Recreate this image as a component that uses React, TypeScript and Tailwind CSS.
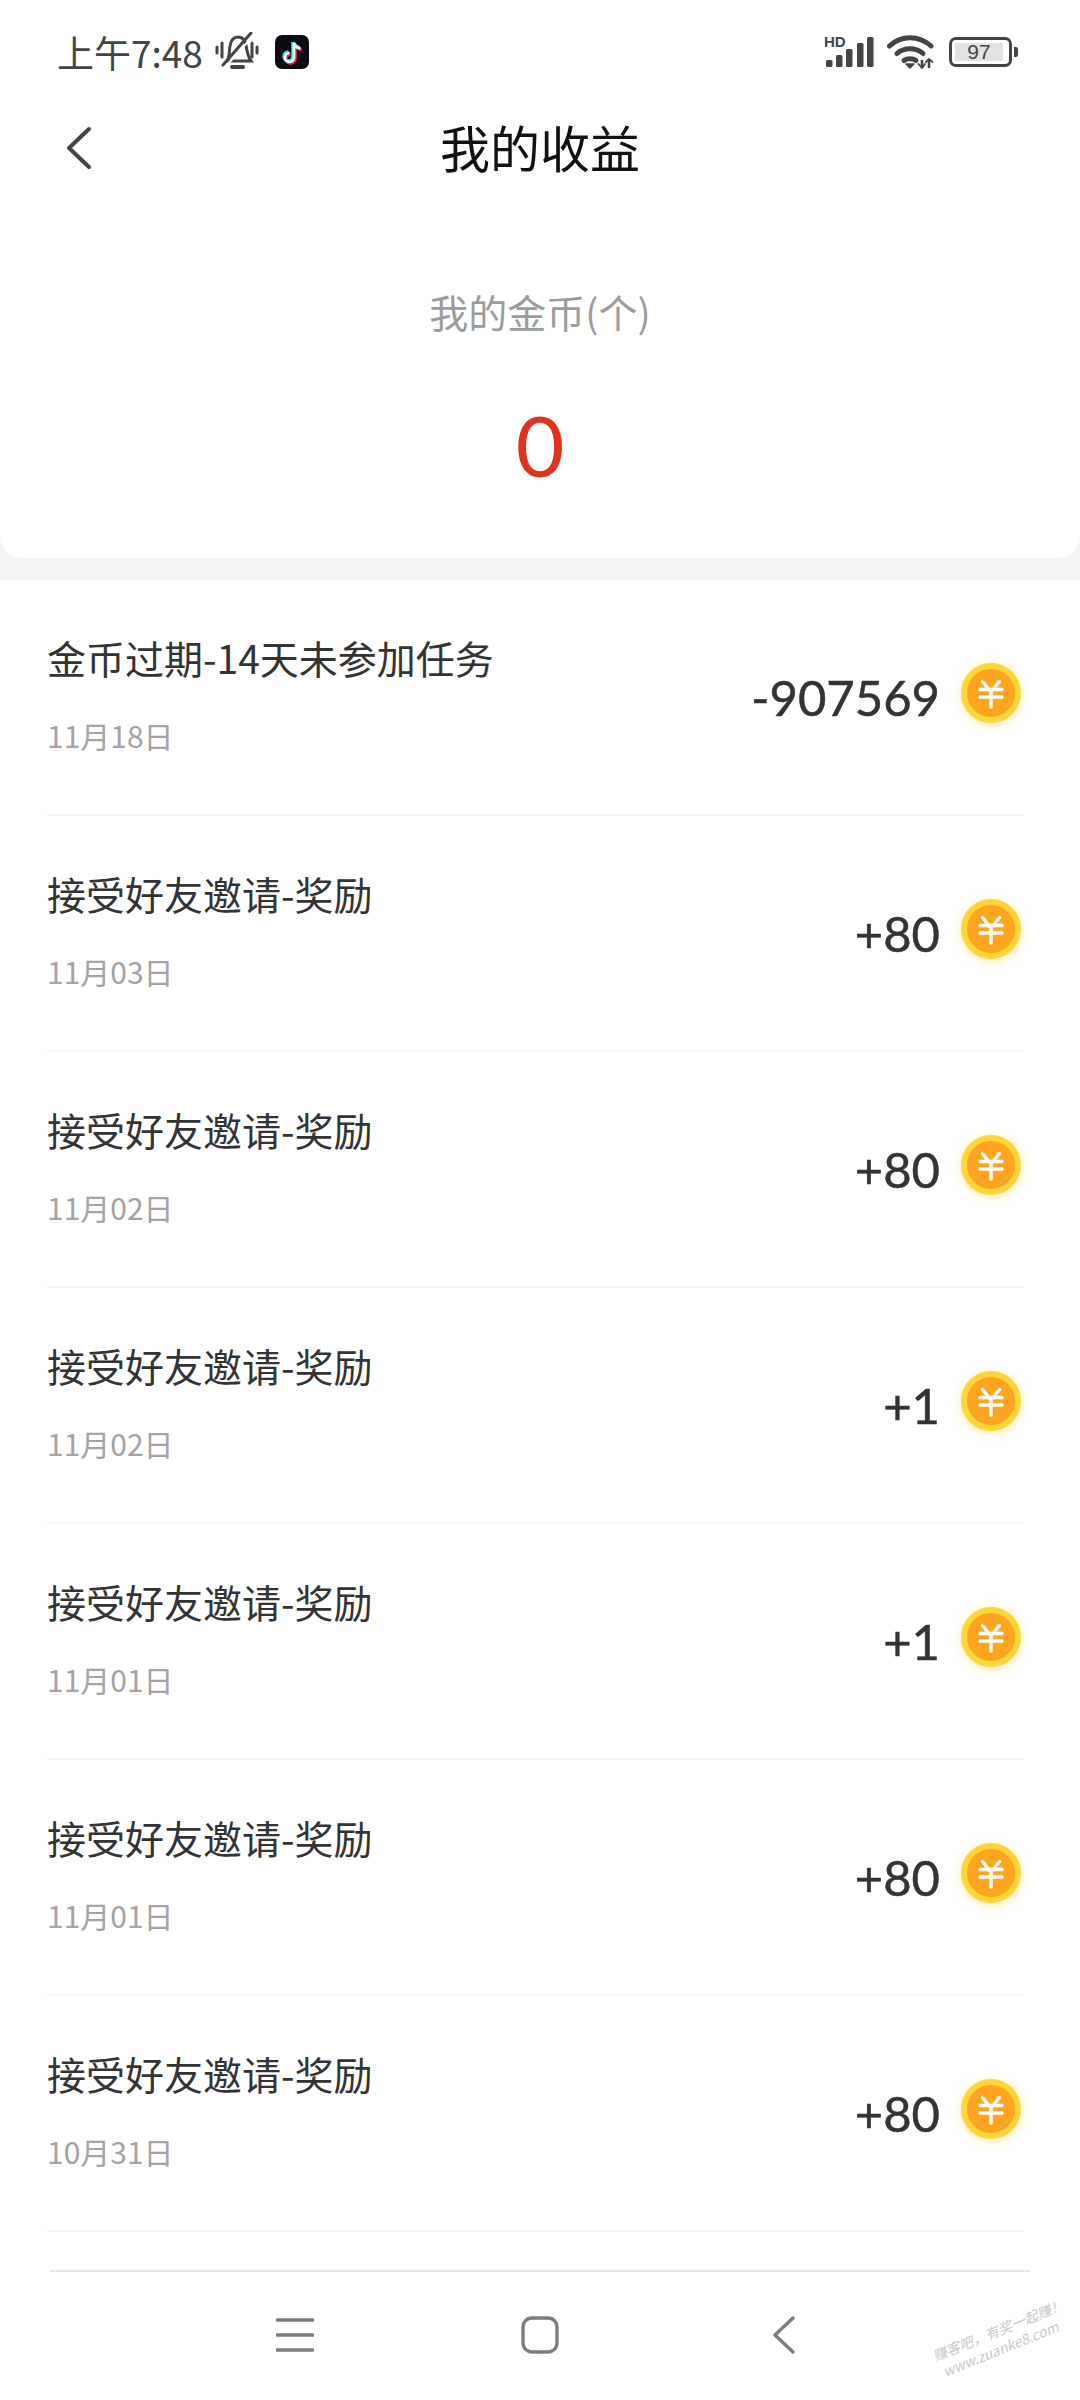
import { ReactNode } from 'react';

const cjk = '"Noto Sans CJK SC", sans-serif';

const records = [
  { title: '金币过期-14天未参加任务', date: '11月18日', amount: '-907569' },
  { title: '接受好友邀请-奖励', date: '11月03日', amount: '+80' },
  { title: '接受好友邀请-奖励', date: '11月02日', amount: '+80' },
  { title: '接受好友邀请-奖励', date: '11月02日', amount: '+1' },
  { title: '接受好友邀请-奖励', date: '11月01日', amount: '+1' },
  { title: '接受好友邀请-奖励', date: '11月01日', amount: '+80' },
  { title: '接受好友邀请-奖励', date: '10月31日', amount: '+80' },
];

function Coin() {
  return (
    <div className="w-[60px] h-[60px] rounded-full bg-[#ffd53a] shadow-[0_2px_10px_rgba(255,214,70,0.5)] flex items-center justify-center shrink-0 -translate-y-[4px]">
      <svg width="48" height="48" viewBox="0 0 48 48">
        <circle cx="24" cy="24" r="24" fill="#ffa41f" />
        <path
          d="M15.5 12.5 L24 23 L32.5 12.5 M13 20.5 H35 M13 28 H35 M24 23 V38"
          stroke="#fff"
          strokeWidth="3.4"
          strokeLinecap="round"
          strokeLinejoin="round"
          fill="none"
        />
      </svg>
    </div>
  );
}

function Record({ title, date, amount }: { title: string; date: string; amount: string }) {
  return (
    <div className="h-[236px] shrink-0 ml-[47px] mr-[56px] border-b-2 border-[#f6f6f6] flex items-center justify-between">
      <div className="flex flex-col pb-[8px]">
        <div className="text-[39px] leading-[52px] text-[#333333]">{title}</div>
        <div className="text-[30px] leading-[40px] mt-[32px] text-[#a3a3a3]">{date}</div>
      </div>
      <div className="flex items-center gap-[21px] mr-[3px]">
        <div className="text-[49px] leading-[60px] text-[#333333] [-webkit-text-stroke:0.5px_#333333]" style={{ fontFamily: 'Lato, sans-serif' }}>
          {amount}
        </div>
        <Coin />
      </div>
    </div>
  );
}

function MuteBell() {
  return (
    <svg width="44" height="40" viewBox="0 0 44 40" fill="none" stroke="#444" strokeLinecap="round">
      <path d="M2 15 V21 M7 11 V25 M37 11 V25 M42 15 V21" strokeWidth="3" />
      <path d="M12 29 C15 24 14 19 15 14 C16 8 19 5 23 5 C27 5 30 8 31 13 C32 20 33 25 36 29 Z" strokeWidth="3" />
      <path d="M17 35 H28" strokeWidth="4" />
      <path d="M8 33 L36 1" strokeWidth="3" />
      <path d="M12 33 L39 3" stroke="#fff" strokeWidth="2" />
    </svg>
  );
}

function TikTok() {
  return (
    <svg width="34" height="34" viewBox="0 0 34 34">
      <rect width="34" height="34" rx="7" fill="#0b0b14" />
      <path d="M19 8 V22 C19 25 17 27 14.5 27 C12 27 10 25 10 22.5 C10 20 12 18 14.5 18 M19 8 C20 11.5 22 13 25.5 13.5" stroke="#fe2c55" strokeWidth="3.4" fill="none" transform="translate(1 1)" />
      <path d="M19 8 V22 C19 25 17 27 14.5 27 C12 27 10 25 10 22.5 C10 20 12 18 14.5 18 M19 8 C20 11.5 22 13 25.5 13.5" stroke="#25f4ee" strokeWidth="3.4" fill="none" transform="translate(-1 -1)" />
      <path d="M19 8 V22 C19 25 17 27 14.5 27 C12 27 10 25 10 22.5 C10 20 12 18 14.5 18 M19 8 C20 11.5 22 13 25.5 13.5" stroke="#fff" strokeWidth="2.6" fill="none" />
    </svg>
  );
}

function Signal() {
  const bars = [
    { x: 0, h: 7 },
    { x: 10, h: 12 },
    { x: 20, h: 18 },
    { x: 31, h: 24 },
    { x: 41, h: 30 },
  ];
  return (
    <div className="relative w-[48px] h-[30px]">
      <svg width="48" height="30" viewBox="0 0 48 30">
        {bars.map((b) => (
          <rect key={b.x} x={b.x} y={30 - b.h} width="6.5" height={b.h} rx="1.5" fill="#444" />
        ))}
      </svg>
      <span className="absolute left-[-2px] top-[-3px] text-[15px] leading-[16px] font-bold text-[#444]" style={{ fontFamily: '"Liberation Sans", sans-serif' }}>
        HD
      </span>
    </div>
  );
}

function Wifi() {
  return (
    <svg width="48" height="34" viewBox="0 0 48 34" fill="none" stroke="#444" strokeWidth="5" strokeLinecap="round">
      <path d="M2.5 11 C14 0 32 0 44 11" />
      <path d="M10 18.5 C17 12 29 12 36 18.5" />
      <path d="M17 25.5 C20 23 26 23 29 25.5" />
      <path d="M19 29 L23 33 L27 29 Z" fill="#444" stroke="#444" strokeWidth="1.5" strokeLinejoin="round" />
      <path d="M35 25 V33 M42 24 V33" strokeWidth="2.6" strokeLinecap="butt" />
      <path d="M31.5 29 L35 33 L38 29 M39 27 L42 24 L45.5 27" strokeWidth="1.8" />
    </svg>
  );
}

function Battery() {
  return (
    <div className="flex items-center gap-[2px]">
      <div className="w-[63px] h-[30px] rounded-[7px] border-[3px] border-[#444] p-[3px]">
        <div className="w-[48px] h-[18px] bg-[#e2e2e2] flex items-center justify-center text-[21px] leading-[18px] text-[#444]" style={{ fontFamily: '"Liberation Sans", sans-serif' }}>
          97
        </div>
      </div>
      <div className="w-[4px] h-[10px] rounded-r-[2px] bg-[#444]" />
    </div>
  );
}

function NavIcon({ children, w }: { children: ReactNode; w: number }) {
  return (
    <svg width={w} height="38" viewBox={`0 0 ${w} 38`} fill="none" stroke="#7c7c7c" strokeLinecap="round" strokeLinejoin="round">
      {children}
    </svg>
  );
}

export default function App() {
  return (
    <div className="relative w-[1080px] h-[2400px] bg-white flex flex-col overflow-hidden" style={{ fontFamily: cjk }}>
      {/* status bar */}
      <div className="h-[96px] shrink-0 pl-[57px] pr-[62px] pt-[8px] flex items-center justify-between">
        <div className="flex items-center">
          <span className="text-[37px] leading-[44px] text-[#444] w-[158px] whitespace-nowrap">上午7:48</span>
          <MuteBell />
          <span className="ml-[16px]"><TikTok /></span>
        </div>
        <div className="flex items-center">
          <Signal />
          <span className="ml-[13px]"><Wifi /></span>
          <span className="ml-[14px]"><Battery /></span>
        </div>
      </div>

      {/* title bar */}
      <div className="relative h-[104px] shrink-0 flex items-center justify-center">
        <svg className="absolute left-[64px] top-[30px]" width="30" height="44" viewBox="0 0 30 44" fill="none" stroke="#444" strokeWidth="4" strokeLinecap="round" strokeLinejoin="round">
          <path d="M25 3 L5 22 L25 41" />
        </svg>
        <span className="text-[50px] leading-[60px] text-[#111] -translate-y-[2px]">我的收益</span>
      </div>

      {/* balance */}
      <div className="bg-[#f4f4f4] shrink-0 pb-[22px]">
        <div className="h-[358px] bg-white rounded-b-[22px] flex flex-col items-center">
          <div className="mt-[86px] text-[39px] leading-[50px] text-[#9b9b9b]">我的金币(个)</div>
          <div className="mt-[54px] text-[84px] leading-[110px] text-[#e0321c]" style={{ fontFamily: 'Lato, sans-serif' }}>0</div>
        </div>
      </div>

      {/* records */}
      <div className="flex-1 min-h-0 overflow-hidden flex flex-col">
        {records.map((r, i) => (
          <Record key={i} title={r.title} date={r.date} amount={r.amount} />
        ))}
      </div>

      {/* nav bar */}
      <div className="h-[130px] shrink-0 mx-[50px] pr-[9px] border-t-2 border-[#e6e6e6] relative flex items-center justify-center">
        <div className="w-[520px] flex items-center justify-between -translate-y-[1px]">
          <NavIcon w={38}>
            <path d="M1.5 4 H36.5 M1.5 19 H36.5 M1.5 34 H36.5" strokeWidth="3.6" />
          </NavIcon>
          <span className="-translate-x-[3px]">
            <NavIcon w={38}>
              <rect x="2" y="2" width="34" height="34" rx="9" strokeWidth="3.4" />
            </NavIcon>
          </span>
          <NavIcon w={24}>
            <path d="M21 2 L3 19 L21 36" strokeWidth="3.4" />
          </NavIcon>
        </div>
      </div>

      {/* watermark */}
      <div className="absolute left-[932px] top-[2322px] w-[130px] -rotate-[22deg] text-[#c8c8c8] text-center italic whitespace-nowrap text-[14px] leading-[18px] underline-offset-2">
        赚客吧，有奖一起赚！
        <br />
        www.zuanke8.com
      </div>
    </div>
  );
}
